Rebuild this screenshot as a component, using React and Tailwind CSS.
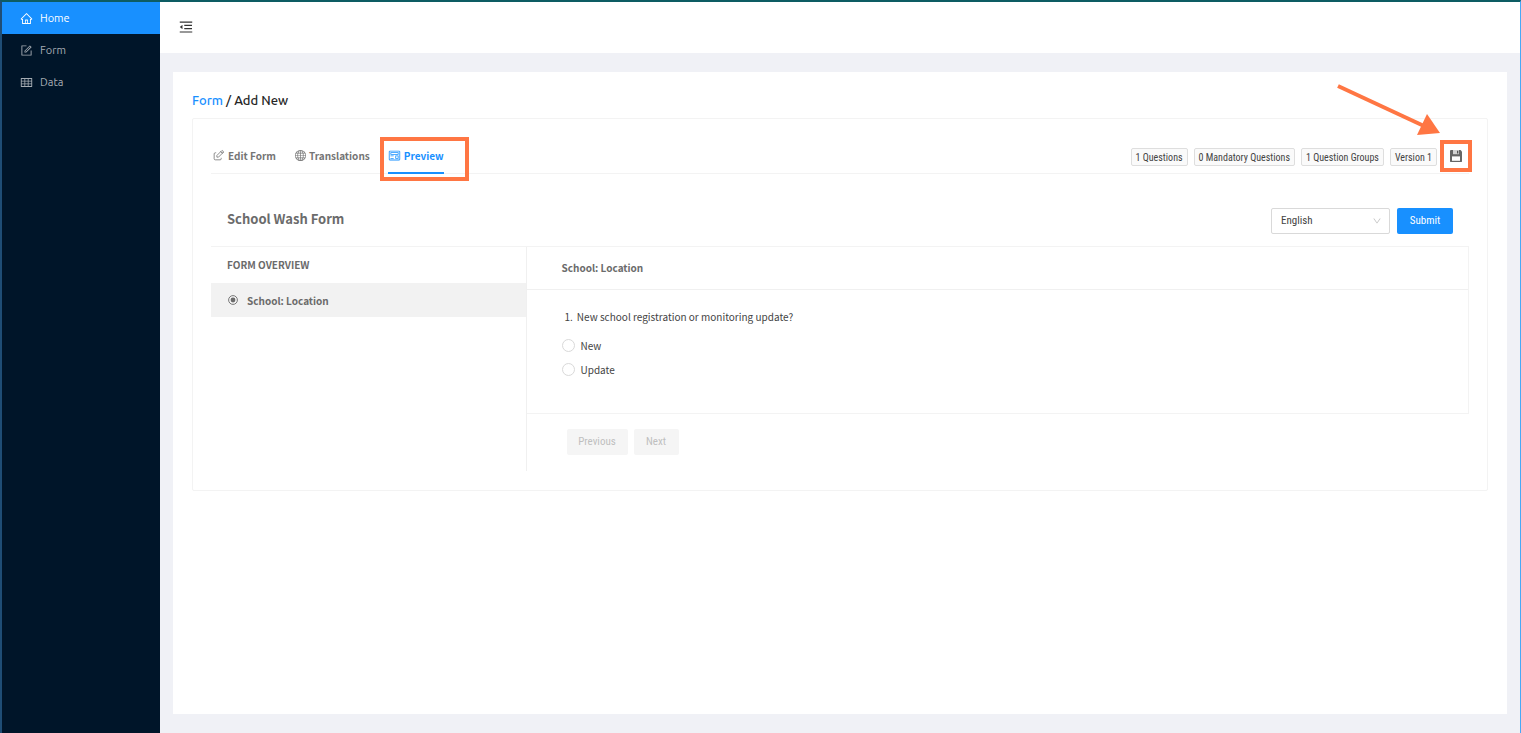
import React, { useState } from 'react';
import { AiOutlineHome, AiOutlineForm, AiOutlineTable, AiOutlineMenuFold, AiOutlineDown } from 'react-icons/ai';
import { BsGlobe } from 'react-icons/bs';
import { VscPreview } from 'react-icons/vsc';
import { TbEdit } from 'react-icons/tb';

const menu = [
  { label: 'Home', icon: AiOutlineHome },
  { label: 'Form', icon: AiOutlineForm },
  { label: 'Data', icon: AiOutlineTable },
];

const tags = ['1 Questions', '0 Mandatory Questions', '1 Question Groups', 'Version 1'];

function Sidebar() {
  const [active] = useState('Home');

  return (
    <aside className="w-[158px] shrink-0 bg-[#001529]">
      <nav className="flex flex-col font-['Ubuntu','Noto_Sans',sans-serif] text-[11px]">
        {menu.map(({ label, icon: Icon }) => (
          <a
            key={label}
            href="#"
            className={
              label === active
                ? 'flex h-8 items-center gap-[7px] bg-[#1890ff] pl-[18px] text-white'
                : 'flex h-8 items-center gap-[7px] pl-[18px] text-[#a6adb4]'
            }
          >
            <Icon className="size-[13px]" />
            {label}
          </a>
        ))}
      </nav>
    </aside>
  );
}

function SaveIcon() {
  return (
    <svg viewBox="0 0 12 12" className="size-3">
      <path d="M0.5 0H10.5L12 1.5V11.5L11.5 12H0.5L0 11.5V0.5Z" fill="#666" />
      <path d="M3 0H9V4.2H3Z" fill="#d4d4d4" />
      <path d="M7 0.8H8.3V3.4H7Z" fill="#555" />
      <path d="M2 6.4H10V10.8H2Z" fill="#fff" />
    </svg>
  );
}

function Tabs() {
  return (
    <div className="flex h-[55px] items-start justify-between border-b border-[#f3f3f3]">
      <div role="tablist" className="flex text-[10px] font-bold text-[#757575]">
        <button role="tab" className="flex h-[72px] items-center gap-[3px] pl-px">
          <TbEdit className="size-[13px]" strokeWidth={1.5} />
          Edit Form
        </button>
        <button role="tab" className="ml-[19px] flex h-[72px] items-center gap-[3px]">
          <BsGlobe className="size-[11px]" />
          Translations
        </button>
        <div className="relative ml-[18px] flex h-[74px] items-center">
          <button role="tab" aria-selected="true" className="flex h-9 items-center gap-[3px] border-b-2 border-[#1890ff] text-[#1890ff]">
            <VscPreview className="size-[13px]" />
            Preview
          </button>
          <span className="pointer-events-none absolute -left-2 top-[18px] h-11 w-[89px] border-4 border-[#ff7643]" />
        </div>
      </div>

      <div className="flex items-center gap-[6px] pt-[29px]">
        {tags.map((tag) => (
          <span
            key={tag}
            className="flex h-[18px] items-center rounded-[2px] border border-[#dedede] bg-[#fafafa] px-1 font-['Roboto_Condensed',Roboto,sans-serif] text-[10px] text-[#444]"
          >
            {tag}
          </span>
        ))}
        <button aria-label="Save" className="relative -mt-[11px] -mb-2 -mr-[3px] -ml-[3px] flex size-8 items-center justify-center border-4 border-[#ff7643]">
          <SaveIcon />
          <svg viewBox="0 0 104 52" className="pointer-events-none absolute -left-[108px] -top-[61px] h-[52px] w-[104px] max-w-none">
            <path d="M2 3L88 43" stroke="#ff7643" strokeWidth="4" fill="none" />
            <path d="M91 31L104 50L81 52Z" fill="#ff7643" />
          </svg>
        </button>
      </div>
    </div>
  );
}

function Preview() {
  const [answer, setAnswer] = useState('');

  return (
    <div className="mt-[21px]">
      <div className="flex h-[51px] items-start justify-between px-4">
        <h2 className="pt-[14px] text-[13px] leading-5 font-bold text-[#6b6b6b]">School Wash Form</h2>
        <div className="flex gap-[7px] pt-[13px] font-['Roboto_Condensed',Roboto,sans-serif] text-[11px]">
          <div className="relative">
            <select
              aria-label="Language"
              className="h-[26px] w-[119px] appearance-none rounded-[2px] border border-[#d9d9d9] bg-white px-[9px] text-[#444]"
            >
              <option>English</option>
            </select>
            <AiOutlineDown className="pointer-events-none absolute right-2 top-2 size-[10px] text-[#bfbfbf]" />
          </div>
          <button className="h-[26px] w-14 rounded-[2px] bg-[#1890ff] text-white">Submit</button>
        </div>
      </div>

      <div className="flex border-t border-[#f3f3f3]">
        <div className="w-1/4 text-[10px] font-bold text-[#6b6b6b]">
          <div className="flex h-9 items-center pb-0.5 pl-4">FORM OVERVIEW</div>
          <div className="flex h-[34px] items-center gap-[9px] bg-[#f2f2f2] pl-[17px]">
            <svg viewBox="0 0 10 10" className="size-[10px]">
              <circle cx="5" cy="5" r="4.4" fill="none" stroke="#6b6b6b" strokeWidth="0.9" />
              <circle cx="5" cy="5" r="2.4" fill="#6b6b6b" />
            </svg>
            School: Location
          </div>
        </div>

        <div className="h-[224px] flex-1 border-l border-[#f0f0f0]">
          <section className="h-[167px] border-r border-b border-[#f3f3f3]">
            <h3 className="flex h-[43px] items-center border-b border-[#f0f0f0] pb-0.5 pl-[35px] text-[10px] font-bold text-[#6b6b6b]">
              School: Location
            </h3>
            <fieldset className="pl-[35px] pt-[17px] text-[10px] text-[#444]">
              <legend className="contents">
                <span className="flex h-5 gap-1 pl-[3px] leading-5">
                  <span>1.</span>
                  <span>New school registration or monitoring update?</span>
                </span>
              </legend>
              <div className="mt-[6px] flex flex-col">
                {['New', 'Update'].map((option) => (
                  <label key={option} className="flex h-6 items-center gap-[6px]">
                    <input
                      type="radio"
                      name="registration"
                      checked={answer === option}
                      onChange={() => setAnswer(option)}
                      className="size-[13px] appearance-none rounded-full border border-[#d9d9d9] bg-white checked:border-4 checked:border-[#1890ff]"
                    />
                    {option}
                  </label>
                ))}
              </div>
            </fieldset>
          </section>
          <div className="flex gap-[6px] pl-10 pt-[15px] font-['Roboto_Condensed',Roboto,sans-serif] text-[11px] text-[#bfbfbf]">
            <button disabled className="h-[26px] w-[61px] rounded-[2px] bg-[#f5f5f5]">Previous</button>
            <button disabled className="h-[26px] w-[45px] rounded-[2px] bg-[#f5f5f5]">Next</button>
          </div>
        </div>
      </div>
    </div>
  );
}

export default function App() {
  return (
    <div className="flex min-h-screen border-t-2 border-r border-l-2 border-t-[#0d5c63] border-r-[#46a9f7] border-l-[#1f4d75] bg-[#f0f1f6] font-['Noto_Sans_CJK_SC',sans-serif]">
      <Sidebar />
      <div className="flex min-w-0 flex-1 flex-col">
        <header className="flex h-[51px] items-center bg-white pb-0.5 pl-[18px]">
          <button aria-label="Toggle menu" className="text-[#333]">
            <AiOutlineMenuFold className="size-4" />
          </button>
        </header>
        <main className="mx-[13px] my-[19px] flex-1 bg-white px-[19px] pt-[18px]">
          <h1 className="h-7 font-['Ubuntu','Noto_Sans',sans-serif] text-[13px] leading-5 font-medium text-[#262626]">
            <a href="#" className="text-[#1890ff]">Form</a> / Add New
          </h1>
          <div className="rounded-[2px] border border-[#f3f3f3] px-[18px] pb-[19px]">
            <Tabs />
            <Preview />
          </div>
        </main>
      </div>
    </div>
  );
}
